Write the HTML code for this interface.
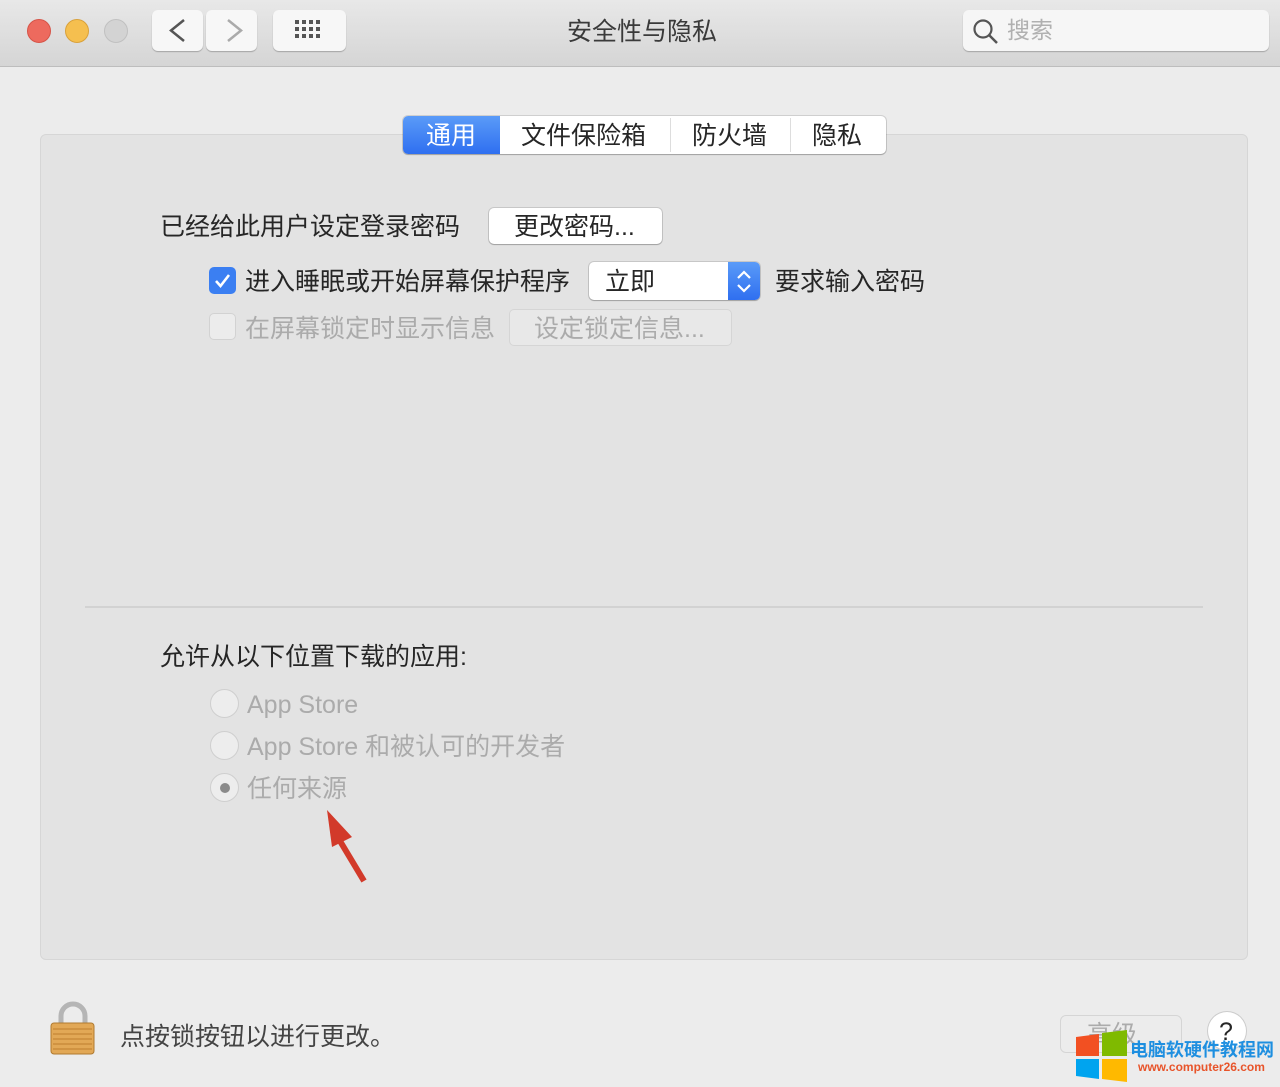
<!DOCTYPE html>
<html><head><meta charset="utf-8">
<style>
*{margin:0;padding:0;box-sizing:border-box}
body{width:1280px;height:1087px;background:#ececec;font-family:"Liberation Sans","Noto Sans CJK SC",sans-serif;position:relative;overflow:hidden;color:#262626}
.abs{position:absolute}
.tb{left:0;top:0;width:1280px;height:67px;background:linear-gradient(#e8e8e8,#d5d5d5);border-bottom:1px solid #bdbdbd}
.dot{width:24px;height:24px;border-radius:50%;top:19px}
.btn{background:#f7f7f7;border-radius:6px;box-shadow:0 1px 1px rgba(0,0,0,.25)}
.panel{left:40px;top:134px;width:1208px;height:826px;background:#e3e3e3;border:1px solid #d6d6d6;border-radius:6px}
.t{font-size:25px;white-space:nowrap;line-height:1}
.gray{color:#ababab}
.pb{background:#fff;border-radius:5px;box-shadow:0 0 0 1px rgba(0,0,0,.12),0 1px 1px rgba(0,0,0,.2)}
.radio{width:29px;height:29px;border-radius:50%;background:#ededed;border:1px solid #cfcfcf}
</style></head><body>
<div class="abs tb"></div>
<div class="abs dot" style="left:27px;background:#ed6a5e;border:1px solid #d65448"></div>
<div class="abs dot" style="left:65px;background:#f5bf4f;border:1px solid #d9a13a"></div>
<div class="abs dot" style="left:104px;background:#d3d3d3;border:1px solid #c0c0c0"></div>
<div class="abs btn" style="left:152px;top:10px;width:51px;height:41px"></div>
<div class="abs btn" style="left:206px;top:10px;width:51px;height:41px"></div>
<svg class="abs" style="left:152px;top:10px" width="106" height="41"><path d="M32 10 L19 20.5 L32 31" stroke="#555" stroke-width="2.5" fill="none"/><path d="M76 10 L89 20.5 L76 31" stroke="#aaa" stroke-width="2.5" fill="none"/></svg>
<div class="abs btn" style="left:273px;top:10px;width:73px;height:41px"></div>
<svg class="abs" style="left:295px;top:20px" width="30" height="22"><g fill="#555">
<rect x="0" y="0" width="4" height="4"/><rect x="7" y="0" width="4" height="4"/><rect x="14" y="0" width="4" height="4"/><rect x="21" y="0" width="4" height="4"/>
<rect x="0" y="7" width="4" height="4"/><rect x="7" y="7" width="4" height="4"/><rect x="14" y="7" width="4" height="4"/><rect x="21" y="7" width="4" height="4"/>
<rect x="0" y="14" width="4" height="4"/><rect x="7" y="14" width="4" height="4"/><rect x="14" y="14" width="4" height="4"/><rect x="21" y="14" width="4" height="4"/></g></svg>
<div class="abs t" style="left:567px;top:20px;font-size:25px;color:#3a3a3a">安全性与隐私</div>
<div class="abs btn" style="left:963px;top:10px;width:306px;height:41px;background:#f6f6f6"></div>
<svg class="abs" style="left:972px;top:18px" width="30" height="28"><circle cx="11" cy="11" r="8.5" stroke="#555" stroke-width="2.2" fill="none"/><path d="M17 17 L25 25" stroke="#555" stroke-width="2.5"/></svg>
<div class="abs t gray" style="left:1007px;top:19px;font-size:23px;color:#b0b0b0">搜索</div>

<div class="abs panel"></div>
<div class="abs pb" style="left:403px;top:116px;width:483px;height:38px"></div>
<div class="abs" style="left:403px;top:116px;width:97px;height:38px;background:linear-gradient(#5a9bf8,#2f6ff0);border-radius:5px 0 0 5px"></div>
<div class="abs" style="left:670px;top:118px;width:1px;height:34px;background:#ddd"></div>
<div class="abs" style="left:790px;top:118px;width:1px;height:34px;background:#ddd"></div>
<div class="abs t" style="left:426px;top:124px;color:#fff">通用</div>
<div class="abs t" style="left:521px;top:124px">文件保险箱</div>
<div class="abs t" style="left:692px;top:124px">防火墙</div>
<div class="abs t" style="left:812px;top:124px">隐私</div>

<div class="abs t" style="left:160px;top:215px">已经给此用户设定登录密码</div>
<div class="abs pb" style="left:489px;top:208px;width:173px;height:36px"></div>
<div class="abs t" style="left:514px;top:215px">更改密码...</div>

<div class="abs" style="left:209px;top:267px;width:27px;height:27px;border-radius:5px;background:#3b7ff2"></div>
<svg class="abs" style="left:209px;top:267px" width="27" height="27"><path d="M7 14 L11.5 19 L20 8" stroke="#fff" stroke-width="2.6" fill="none"/></svg>
<div class="abs t" style="left:245px;top:270px">进入睡眠或开始屏幕保护程序</div>
<div class="abs pb" style="left:589px;top:262px;width:171px;height:38px"></div>
<div class="abs" style="left:728px;top:262px;width:32px;height:38px;background:linear-gradient(#5a9bf8,#2f6ff0);border-radius:0 5px 5px 0"></div>
<svg class="abs" style="left:728px;top:262px" width="32" height="38"><path d="M10 16 L16 10 L22 16 M10 23 L16 29 L22 23" stroke="#fff" stroke-width="2.2" fill="none"/></svg>
<div class="abs t" style="left:605px;top:270px">立即</div>
<div class="abs t" style="left:775px;top:270px">要求输入密码</div>

<div class="abs" style="left:209px;top:313px;width:27px;height:27px;border-radius:5px;background:#ececec;border:1px solid #d2d2d2"></div>
<div class="abs t gray" style="left:245px;top:317px">在屏幕锁定时显示信息</div>
<div class="abs" style="left:509px;top:309px;width:223px;height:37px;border-radius:5px;background:#e8e8e8;border:1px solid #d5d5d5"></div>
<div class="abs t gray" style="left:534px;top:317px">设定锁定信息...</div>

<div class="abs" style="left:85px;top:606px;width:1118px;height:2px;background:#d2d2d2"></div>
<div class="abs t" style="left:160px;top:645px">允许从以下位置下载的应用:</div>
<div class="abs radio" style="left:210px;top:689px"></div>
<div class="abs t gray" style="left:247px;top:693px">App Store</div>
<div class="abs radio" style="left:210px;top:731px"></div>
<div class="abs t gray" style="left:247px;top:735px">App Store 和被认可的开发者</div>
<div class="abs radio" style="left:210px;top:773px"></div>
<div class="abs" style="left:220px;top:783px;width:10px;height:10px;border-radius:50%;background:#8a8a8a"></div>
<div class="abs t gray" style="left:247px;top:777px">任何来源</div>
<svg class="abs" style="left:320px;top:805px" width="60" height="80"><path d="M44 76 L20 36" stroke="#d23a2a" stroke-width="6"/><path d="M7 5 L32 32 L12 42 Z" fill="#d23a2a"/></svg>

<svg class="abs" style="left:48px;top:1000px" width="50" height="58"><path d="M13 24 V16 A12 12 0 0 1 37 16 V24" stroke="#b5b5b5" stroke-width="5" fill="none"/>
<rect x="3" y="23" width="43" height="31" rx="3" fill="#e2a856" stroke="#b07a30"/>
<g stroke="#c98c3c" stroke-width="1.5"><path d="M5 29H44M5 34H44M5 39H44M5 44H44M5 49H44"/></g></svg>
<div class="abs t" style="left:120px;top:1025px;color:#444">点按锁按钮以进行更改。</div>
<div class="abs" style="left:1060px;top:1015px;width:122px;height:38px;border-radius:6px;background:#ececec;border:1px solid #d5d5d5"></div>
<div class="abs t gray" style="left:1087px;top:1023px">高级</div>
<div class="abs" style="left:1208px;top:1012px;width:38px;height:38px;border-radius:50%;background:#fff;box-shadow:0 0 0 1px #ccc"></div>
<div class="abs t" style="left:1219px;top:1020px">?</div>
<svg class="abs" style="left:1076px;top:1030px" width="52" height="52"><path d="M0 7 L23 4 V26 H0Z" fill="#f25022"/><path d="M26 3 L51 0 V26 H26Z" fill="#7fba00"/><path d="M0 29 H23 V49 L0 46Z" fill="#00a4ef"/><path d="M26 29 H51 V52 L26 49Z" fill="#ffb900"/></svg>
<div class="abs" style="left:1130px;top:1036px;font-size:18px;font-weight:bold;color:#1e8fe0;white-space:nowrap">电脑软硬件教程网</div>
<div class="abs" style="left:1138px;top:1060px;font-size:12px;font-weight:bold;color:#e8542a;white-space:nowrap">www.computer26.com</div>
</body></html>
